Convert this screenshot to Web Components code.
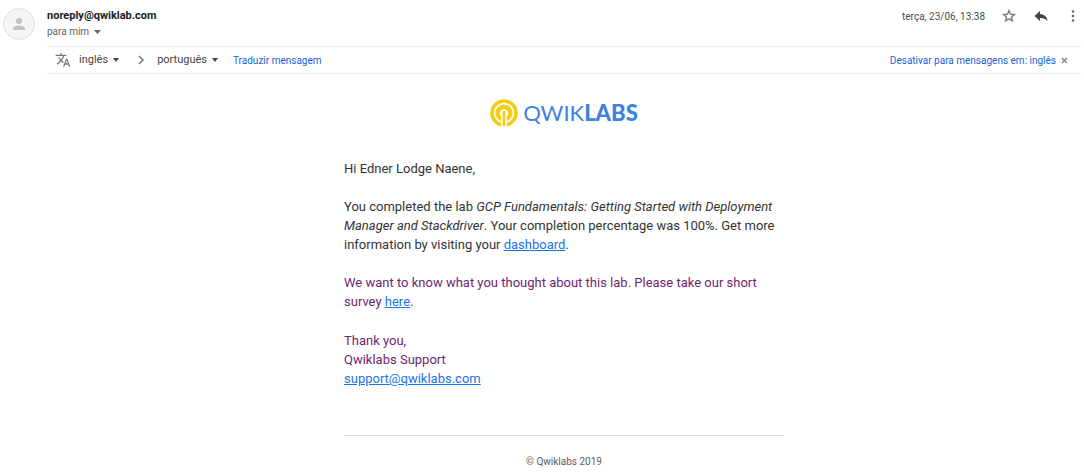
<!DOCTYPE html>
<html lang="pt">
<head>
<meta charset="utf-8">
<meta name="viewport" content="width=device-width, initial-scale=1">
<title>Qwiklabs</title>
<style>
body { margin: 0; background: #fff; font-family: Roboto, "Liberation Sans", sans-serif; color: #202124; }
</style>
</head>
<body>
<mail-message>
  <mail-avatar slot="avatar"></mail-avatar>
  <mail-header slot="header" recipient="para mim" date="terça, 23/06, 13:38">noreply@qwiklab.com</mail-header>
  <translate-bar slot="content" from="inglês" to="português"></translate-bar>
  <lab-letter slot="content"></lab-letter>
</mail-message>

<script>
function define(name, html, setup) {
  const template = document.createElement('template');
  template.innerHTML = '<style>:host,*{box-sizing:border-box}button{font:inherit;color:inherit;background:none;border:0;padding:0;cursor:pointer}svg{display:block;flex:none}</style>' + html;
  customElements.define(name, class extends HTMLElement {
    constructor() {
      super();
      this.attachShadow({ mode: 'open' }).append(template.content.cloneNode(true));
    }
    connectedCallback() { if (setup) setup(this, this.shadowRoot); }
  });
}

define('mail-message', `
<style>
:host { display: grid; grid-template-columns: 32px minmax(0, 1fr); column-gap: 12px; padding: 8px 3px 0; }
</style>
<slot name="avatar"></slot>
<main><slot name="header"></slot><slot name="content"></slot></main>`);

define('mail-avatar', `
<style>:host { display: block; }</style>
<svg width="32" height="32" viewBox="0 0 32 32" role="img" aria-label="Remetente">
  <circle cx="16" cy="16" r="15.5" fill="#f5f5f5" stroke="#e2e2e2"/>
  <circle cx="16" cy="13" r="3" fill="#c4c4c4"/>
  <path d="M10 22v-1.500c0-2 4-3 6-3s6 1 6 3V22z" fill="#c4c4c4"/>
</svg>`);

define('mail-header', `
<style>
:host { display: flex; justify-content: space-between; height: 38px; padding-right: 3px; }
h1 { margin: 0; font-size: 11px; line-height: 16px; font-weight: 700; }
.to { display: flex; align-items: center; gap: 5px; font-size: 10px; line-height: 16px; color: #5f6368; }
.tools { display: flex; align-items: center; height: 16px; font-size: 10px; color: #4a4d51; }
.star { margin-left: 16px; }
.reply { margin-left: 17px; }
.more { margin-left: 20px; }
</style>
<div><h1><slot></slot></h1>
<button class="to"><span></span><svg width="7" height="4" viewBox="0 0 7 4"><path d="M0 0h7L3.500 4z" fill="#666"/></svg></button></div>
<div class="tools"><time></time>
<button class="star" aria-label="Com estrela"><svg width="16" height="16" viewBox="0 0 24 24"><path fill="#777" stroke="#777" stroke-width=".5" d="M22 9.240l-7.190-.62L12 2 9.190 8.630 2 9.240l5.460 4.730L5.820 21 12 17.270 18.180 21l-1.630-7.030L22 9.240zM12 15.400l-3.760 2.270 1-4.280-3.320-2.880 4.380-.38L12 6.100l1.710 4.040 4.380.38-3.320 2.880 1 4.280L12 15.400z"/></svg></button>
<button class="reply" aria-label="Responder"><svg width="14" height="16" viewBox="0 0 14 16"><path fill="#444" d="M6 3v3c4.500.300 7 3 7.500 7C11.500 10.700 9.300 10 6 10v3L.5 8z"/></svg></button>
<button class="more" aria-label="Mais"><svg width="10" height="16" viewBox="0 0 10 16" fill="#666"><circle cx="5" cy="3.500" r="1.300"/><circle cx="5" cy="8" r="1.300"/><circle cx="5" cy="12.500" r="1.300"/></svg></button>
</div>`, (host, root) => {
  root.querySelector('.to span').textContent = host.getAttribute('recipient');
  root.querySelector('time').textContent = host.getAttribute('date');
});

define('translate-bar', `
<style>
:host { display: flex; align-items: center; height: 28px; padding: 0 13px 0 8px; border: solid #ebebeb; border-width: 1px 0; font-size: 11px; color: #444; }
label { display: flex; align-items: center; gap: 5px; }
select { appearance: none; field-sizing: content; font: inherit; line-height: 16px; color: inherit; border: 0; padding: 0; margin: 0; background: none; }
.from { margin-left: 8px; }
.chevron { margin: 0 12px 0 18px; }
a { font-size: 10px; color: #1a5fd8; text-decoration: none; }
.translate { margin-left: 15px; }
.off { margin-left: auto; }
.close { margin-left: 5px; }
</style>
<svg width="16" height="16" viewBox="0 0 24 24"><path fill="#777" d="M12.870 15.070l-2.540-2.510.03-.03c1.740-1.940 2.980-4.170 3.710-6.530H17V4h-7V2H8v2H1v1.990h11.170C11.500 7.920 10.440 9.750 9 11.350 8.070 10.320 7.300 9.190 6.690 8h-2c.73 1.630 1.730 3.170 2.980 4.560l-5.090 5.020L4 19l5-5 3.110 3.110.76-2.040zM18.500 10h-2L12 22h2l1.120-3h4.750L21 22h2l-4.500-12zm-2.620 7l1.620-4.330L19.120 17h-3.240z"/></svg>
<label class="from"><select aria-label="Idioma de origem"><option></option></select><svg width="6" height="4" viewBox="0 0 6 4"><path d="M0 0h6L3 4z" fill="#444"/></svg></label>
<svg class="chevron" width="8" height="10" viewBox="0 0 8 10"><path d="M2 1l4 4-4 4" fill="none" stroke="#777" stroke-width="1.500"/></svg>
<label><select aria-label="Idioma de destino"><option></option></select><svg width="6" height="4" viewBox="0 0 6 4"><path d="M0 0h6L3 4z" fill="#444"/></svg></label>
<a class="translate" href="#traduzir">Traduzir mensagem</a>
<a class="off" href="#desativar">Desativar para mensagens em: inglês</a>
<button class="close" aria-label="Fechar"><svg width="7" height="7" viewBox="0 0 7 7"><path d="M1 1l5 5M6 1L1 6" stroke="#888" stroke-width="1.600"/></svg></button>`, (host, root) => {
  const options = root.querySelectorAll('option');
  options[0].textContent = host.getAttribute('from');
  options[1].textContent = host.getAttribute('to');
});

define('qwiklabs-logo', `
<style>
:host { display: flex; justify-content: center; align-items: center; gap: 5px; height: 30px; font: 400 22px/30px Lato, sans-serif; color: #3c82df; }
b { font-weight: 900; }
</style>
<svg width="28" height="30" viewBox="0 0 28 30">
  <circle cx="14" cy="15" r="12" fill="none" stroke="#f3cc16" stroke-width="3.600"/>
  <circle cx="14" cy="15" r="8.600" fill="#f3cc16"/>
  <path d="M11.200 29V18.300a4 4 0 1 1 5.600 0V29z" fill="#fff"/>
  <path d="M14 13V28" stroke="#f3cc16" stroke-width="2.600"/>
</svg>
<span>QWIK<b>LABS</b></span>`);

define('lab-letter', `
<style>
:host { display: block; max-width: 440px; margin: 0 auto; padding-top: 24px; font-size: 13px; line-height: 19px; color: #333; }
p { margin: 0 0 19px; }
.body { padding: 31px 0 27px; }
.quoted { margin-bottom: 20px; color: #702573; }
a { color: #1a73e8; text-decoration: underline; }
footer { border-top: 1px solid #dedede; padding-top: 16px; text-align: center; font-size: 10px; color: #5c5c5c; }
</style>
<qwiklabs-logo></qwiklabs-logo>
<div class="body">
<p>Hi Edner Lodge Naene,</p>
<p>You completed the lab <em>GCP Fundamentals: Getting Started with Deployment Manager and Stackdriver</em>. Your completion percentage was 100%. Get more information by visiting your <a href="#dashboard">dashboard</a>.</p>
<p class="quoted">We want to know what you thought about this lab. Please take our short survey <a href="#survey">here</a>.</p>
<p class="quoted">Thank you,<br>Qwiklabs Support<br><a href="mailto:support@qwiklabs.com">support@qwiklabs.com</a></p>
</div>
<footer>© Qwiklabs 2019</footer>`);
</script>
</body>
</html>
